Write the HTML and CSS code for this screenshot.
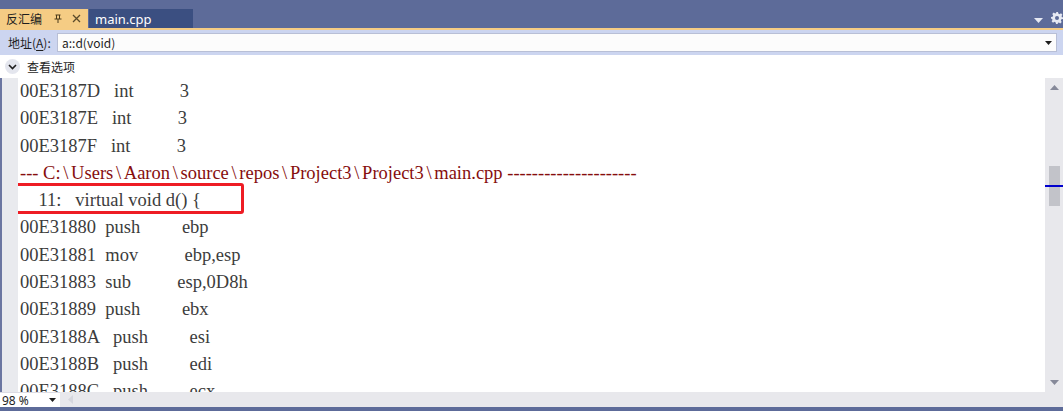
FILE: index.html
```html
<!DOCTYPE html>
<html lang="zh">
<head>
<meta charset="utf-8">
<title>反汇编</title>
<link rel="stylesheet" href="styles.css">
</head>
<body>
<div class="window">
  <div class="tabbar">
    <div class="tab active">
      <span class="tab-title">反汇编</span>
      <svg class="pin" width="8" height="9" viewBox="0 0 8 9"><path d="M1.5 1h5M2.5 1v4M5.5 1v4M0.5 5h7M4 5v4" stroke="#4b3a1a" stroke-width="1" fill="none"/></svg>
      <svg class="close" width="9" height="9" viewBox="0 0 9 9"><path d="M1 1l7 7M8 1l-7 7" stroke="#5a4a2a" stroke-width="1.3" fill="none"/></svg>
    </div>
    <div class="tab other">main.cpp</div>
    <div class="tab-spacer"></div>
    <svg class="tb-drop" width="9" height="5" viewBox="0 0 9 5"><path d="M0 0h9L4.5 5z" fill="#e6e9f3"/></svg>
    <svg class="tb-gear" width="12" height="12" viewBox="0 0 12 12"><path d="M5 0h2l.3 1.6 1.3.6 1.4-.9 1.4 1.4-.9 1.4.6 1.3L12 5v2l-1.6.3-.6 1.3.9 1.4-1.4 1.4-1.4-.9-1.3.6L7 12H5l-.3-1.6-1.3-.6-1.4.9L.6 9.3l.9-1.4L.9 6.6 0 7V5l1.6-.3.6-1.3-.9-1.4L2.7.6l1.4.9 1.3-.6z" fill="#e6e9f3"/><circle cx="6" cy="6" r="2" fill="#5d6b99"/></svg>
  </div>
  <div class="accent"></div>
  <div class="addrbar">
    <span class="addr-label">地址(<u>A</u>):</span>
    <div class="addr-input">
      <span class="addr-value">a::d(void)</span>
      <svg class="addr-drop" width="7" height="4" viewBox="0 0 7 4"><path d="M0 0h7L3.5 4z" fill="#1e1e1e"/></svg>
    </div>
  </div>
  <div class="options">
    <span class="opt-circle"><svg width="9" height="6" viewBox="0 0 9 6"><path d="M1 1l3.5 3.5L8 1" stroke="#1e1e1e" stroke-width="1.6" fill="none"/></svg></span>
    <span class="opt-label">查看选项</span>
  </div>
  <div class="main">
    <div class="gutter"></div>
    <div class="code">
<div class="line">00E3187D   int          3</div>
<div class="line">00E3187E   int          3</div>
<div class="line">00E3187F   int          3</div>
<div class="line path">--- C:<span class="bs">\</span>Users<span class="bs">\</span>Aaron<span class="bs">\</span>source<span class="bs">\</span>repos<span class="bs">\</span>Project3<span class="bs">\</span>Project3<span class="bs">\</span>main.cpp ---------------------</div>
<div class="line">    11:   virtual void d() {</div>
<div class="line">00E31880  push         ebp</div>
<div class="line">00E31881  mov          ebp,esp</div>
<div class="line">00E31883  sub          esp,0D8h</div>
<div class="line">00E31889  push         ebx</div>
<div class="line">00E3188A   push         esi</div>
<div class="line">00E3188B   push         edi</div>
<div class="line">00E3188C   push         ecx</div>
      <div class="highlight"></div>
    </div>
    <div class="vscroll">
      <svg class="arrow-up" width="9" height="5" viewBox="0 0 9 5"><path d="M0 5h9L4.5 0z" fill="#868999"/></svg>
      <div class="track"><div class="thumb"></div></div>
      <svg class="arrow-down" width="9" height="5" viewBox="0 0 9 5"><path d="M0 0h9L4.5 5z" fill="#868999"/></svg>
      <div class="marker"></div>
    </div>
  </div>
  <div class="hbar">
    <div class="zoom">
      <span>98 %</span>
      <svg width="7" height="4" viewBox="0 0 7 4"><path d="M0 0h7L3.5 4z" fill="#1e1e1e"/></svg>
    </div>
    <div class="htrack">
      <svg width="5" height="9" viewBox="0 0 5 9"><path d="M5 0v9L0 4.5z" fill="#d6d7de"/></svg>
    </div>
    <div class="corner"></div>
  </div>
  <div class="bottom"></div>
</div>
</body>
</html>
```
FILE: styles.css
```css
html, body {
  margin: 0;
  padding: 0;
  background: #ffffff;
}
.window {
  width: 1063px;
  height: 411px;
  overflow: hidden;
  display: flex;
  flex-direction: column;
  font-family: "Noto Sans CJK SC", "Noto Sans", sans-serif;
  font-size: 12px;
  color: #1e1e1e;
}
.tabbar {
  height: 28px;
  background: #5d6b99;
  display: flex;
  align-items: flex-end;
}
.tab {
  height: 19px;
  display: flex;
  align-items: center;
  box-sizing: border-box;
}
.tab.active {
  width: 88px;
  background: #f5cc84;
  padding-left: 6px;
}
.tab-title {
  font-size: 12px;
  color: #1e1e1e;
  line-height: 19px;
}
.pin {
  margin-left: 12px;
}
.close {
  margin-left: 10px;
}
.tab.other {
  width: 104px;
  margin-left: 1px;
  background: #3b4f81;
  color: #ffffff;
  padding-left: 6px;
  font-family: "Noto Sans", "Liberation Sans", sans-serif;
  font-size: 13px;
}
.tab-spacer {
  flex: 1;
}
.tb-drop {
  align-self: center;
  margin-top: 12px;
  margin-right: 8px;
}
.tb-gear {
  align-self: center;
  margin-top: 8px;
}
.accent {
  height: 2px;
  background: #f5cc84;
}
.addrbar {
  height: 25px;
  background: #ccd5f0;
  display: flex;
  align-items: center;
  padding-left: 8px;
  padding-right: 6px;
}
.addr-label {
  width: 49px;
  line-height: 16px;
}
.addr-label u {
  text-decoration-thickness: 1px;
  text-underline-offset: 2px;
}
.addr-input {
  flex: 1;
  height: 19px;
  background: #fcfcfc;
  border: 1px solid #b8bfd6;
  box-sizing: border-box;
  display: flex;
  align-items: center;
  padding: 0 4px 0 4px;
}
.addr-value {
  flex: 1;
  font-size: 12px;
}
.options {
  height: 23px;
  display: flex;
  align-items: center;
  padding-left: 5px;
  background: #ffffff;
}
.opt-circle {
  width: 15px;
  height: 15px;
  border-radius: 50%;
  background: #e4e6ee;
  display: flex;
  align-items: center;
  justify-content: center;
}
.opt-label {
  margin-left: 7px;
}
.main {
  height: 314px;
  display: flex;
}
.gutter {
  width: 16px;
  border-left: 2px solid #6b76a1;
  background: #e9eaee;
}
.code {
  flex: 1;
  position: relative;
  padding-left: 2px;
  font-family: "Liberation Serif", "Times New Roman", serif;
  font-size: 18.5px;
  color: #3c3c3c;
  overflow: hidden;
}
.line {
  height: 27.3px;
  line-height: 27.3px;
  white-space: pre;
}
.line.path {
  color: #860d0d;
}
.bs {
  padding: 0 2.7px;
}
.highlight {
  position: absolute;
  left: -3px;
  top: 105px;
  width: 223px;
  height: 25px;
  border: 3px solid #ee1c24;
  border-radius: 3px;
}
.vscroll {
  width: 18px;
  background: #e8e8ec;
  position: relative;
  display: flex;
  flex-direction: column;
  align-items: center;
}
.arrow-up {
  margin-top: 7px;
}
.track {
  flex: 1;
  width: 11px;
  position: relative;
}
.thumb {
  position: absolute;
  left: 0;
  top: 76px;
  width: 11px;
  height: 40px;
  background: #c2c3c9;
}
.arrow-down {
  margin-bottom: 7px;
}
.marker {
  position: absolute;
  left: 0;
  top: 107px;
  width: 18px;
  height: 2px;
  background: #0000cd;
}
.hbar {
  height: 15px;
  display: flex;
  background: #e8e8ec;
}
.zoom {
  width: 60px;
  background: #ffffff;
  border-top: 1px solid #dcdce4;
  box-sizing: border-box;
  display: flex;
  align-items: center;
  justify-content: space-between;
  padding: 0 4px 0 2px;
  font-family: "Noto Sans", "Liberation Sans", sans-serif;
  font-size: 12px;
}
.htrack {
  flex: 1;
  display: flex;
  align-items: center;
  padding-left: 8px;
}
.corner {
  width: 18px;
}
.bottom {
  height: 4px;
  background: #5d6b99;
}
```
